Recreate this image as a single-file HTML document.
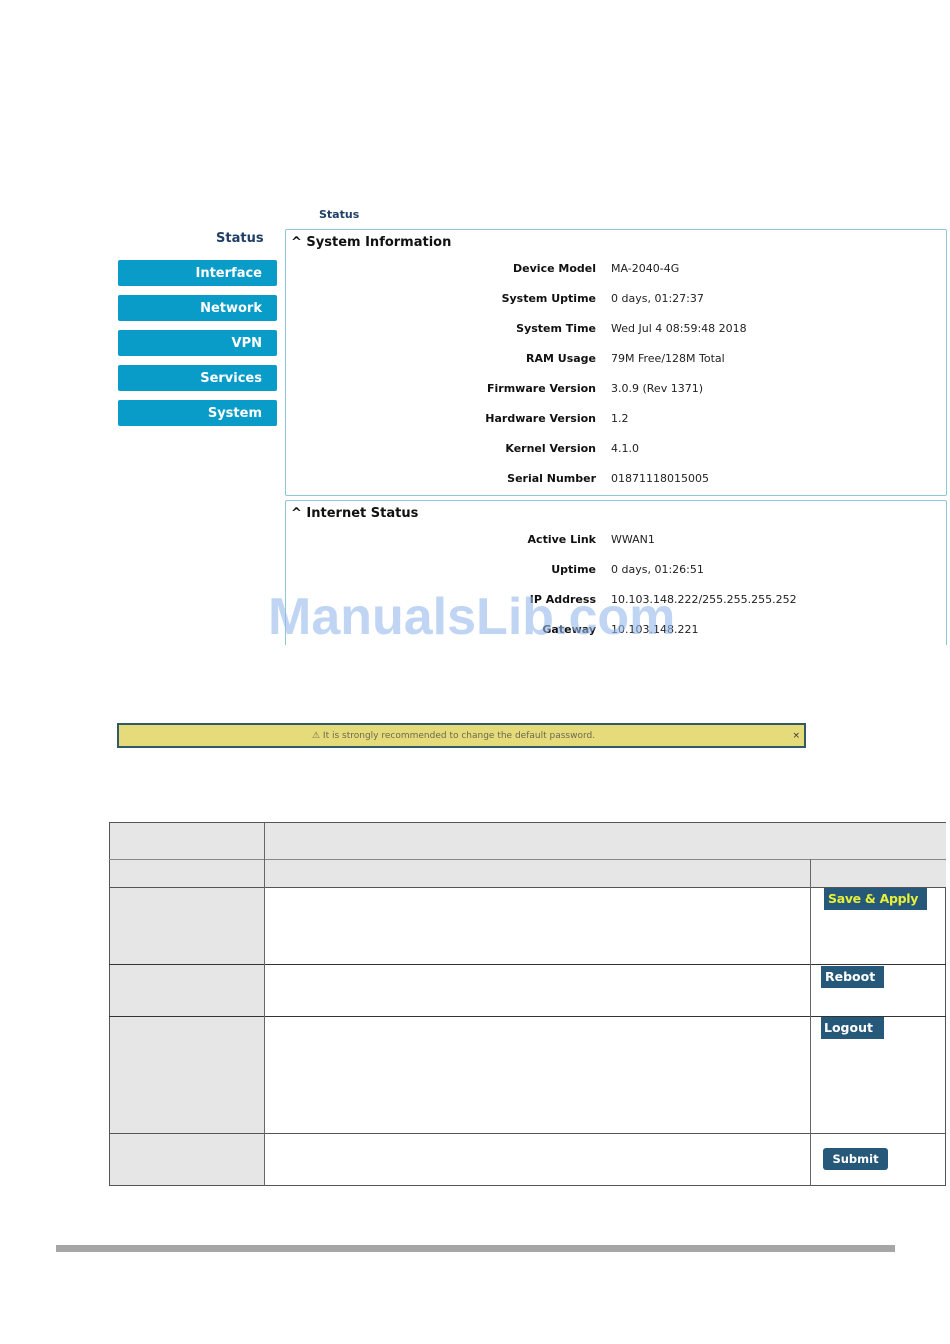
<!DOCTYPE html>
<html><head><meta charset="utf-8"><style>
body{margin:0;width:950px;height:1344px;background:#fff;position:relative;font-family:"DejaVu Sans","Liberation Sans",sans-serif;overflow:hidden}
.a{position:absolute}
.nav{position:absolute;left:118px;width:159px;height:26px;background:#0a9cc8;border-radius:2px;color:#fff;font-weight:bold;font-size:13px;text-align:right;box-sizing:border-box;padding-right:15px;line-height:28px}
.panel{position:absolute;left:285px;width:660px;border:1px solid #8cc9d8;border-radius:2px}
.h{position:absolute;left:5px;font-size:13px;font-weight:bold;color:#111}
.l{position:absolute;right:350px;font-size:11px;font-weight:bold;color:#111;text-align:right}
.v{position:absolute;left:325px;font-size:11px;color:#222;white-space:nowrap}
.btn{position:absolute;background:#26587a;color:#fff;font-weight:bold;font-size:13px;line-height:22px;padding:0 4px;box-sizing:border-box;text-align:left}
</style></head><body>
<div class="a" style="left:319px;top:208px;font-size:11px;font-weight:bold;color:#1f3f66">Status</div>
<div class="a" style="left:216px;top:231px;font-size:13px;font-weight:bold;color:#1f3f66">Status</div>
<div class="nav" style="top:260px">Interface</div>
<div class="nav" style="top:295px">Network</div>
<div class="nav" style="top:330px">VPN</div>
<div class="nav" style="top:365px">Services</div>
<div class="nav" style="top:400px">System</div>

<div class="panel" style="top:229px;height:265px">
<div class="h" style="top:5px">^ System Information</div>
<div class="l" style="top:32px">Device Model</div><div class="v" style="top:32px">MA-2040-4G</div>
<div class="l" style="top:62px">System Uptime</div><div class="v" style="top:62px">0 days, 01:27:37</div>
<div class="l" style="top:92px">System Time</div><div class="v" style="top:92px">Wed Jul 4 08:59:48 2018</div>
<div class="l" style="top:122px">RAM Usage</div><div class="v" style="top:122px">79M Free/128M Total</div>
<div class="l" style="top:152px">Firmware Version</div><div class="v" style="top:152px">3.0.9 (Rev 1371)</div>
<div class="l" style="top:182px">Hardware Version</div><div class="v" style="top:182px">1.2</div>
<div class="l" style="top:212px">Kernel Version</div><div class="v" style="top:212px">4.1.0</div>
<div class="l" style="top:242px">Serial Number</div><div class="v" style="top:242px">01871118015005</div>
</div>
<div class="panel" style="top:500px;height:160px;border-bottom:none">
<div class="h" style="top:5px">^ Internet Status</div>
<div class="l" style="top:32px">Active Link</div><div class="v" style="top:32px">WWAN1</div>
<div class="l" style="top:62px">Uptime</div><div class="v" style="top:62px">0 days, 01:26:51</div>
<div class="l" style="top:92px">IP Address</div><div class="v" style="top:92px">10.103.148.222/255.255.255.252</div>
<div class="l" style="top:122px">Gateway</div><div class="v" style="top:122px">10.103.148.221</div>
</div>
<div class="a" style="left:0;top:645px;width:950px;height:40px;background:#fff"></div>
<div class="a" style="left:268px;top:587px;font-size:52px;font-weight:bold;color:rgba(150,185,235,0.6);font-family:'Liberation Sans',sans-serif">ManualsLib.com</div>

<div class="a" style="left:117px;top:723px;width:685px;height:21px;background:#e6db7a;border:2px solid #2f5a66;font-size:9px;color:#6a6a50;line-height:23px">
<span style="position:absolute;left:193px">⚠ It is strongly recommended to change the default password.</span>
<span style="position:absolute;right:4px;color:#333">×</span></div>

<div class="a" style="left:109px;top:822px;width:837px;height:364px;border:1px solid #555;box-sizing:border-box"></div>
<div class="a" style="left:110px;top:823px;width:836px;height:64px;background:#e6e6e6"></div>
<div class="a" style="left:110px;top:887px;width:154px;height:298px;background:#e6e6e6"></div>
<div class="a" style="left:109px;top:859px;width:837px;height:1px;background:#888"></div>
<div class="a" style="left:109px;top:887px;width:837px;height:1px;background:#555"></div>
<div class="a" style="left:109px;top:964px;width:837px;height:1px;background:#333"></div>
<div class="a" style="left:109px;top:1016px;width:837px;height:1px;background:#333"></div>
<div class="a" style="left:109px;top:1133px;width:837px;height:1px;background:#555"></div>
<div class="a" style="left:264px;top:823px;width:1px;height:363px;background:#666"></div>
<div class="a" style="left:810px;top:859px;width:1px;height:327px;background:#666"></div>

<div class="btn" style="left:824px;top:888px;width:103px;color:#e8f03a;font-size:12.5px;letter-spacing:-0.3px">Save &amp; Apply</div>
<div class="btn" style="left:821px;top:966px;width:63px;font-size:12.5px">Reboot</div>
<div class="btn" style="left:821px;top:1017px;width:63px;font-size:12.5px;padding-left:3px">Logout</div>
<div class="btn" style="left:823px;top:1148px;width:65px;font-size:11.5px;text-align:center;padding:0;border-radius:3px">Submit</div>

<div class="a" style="left:56px;top:1245px;width:839px;height:7px;background:#a6a6a6"></div>
</body></html>
